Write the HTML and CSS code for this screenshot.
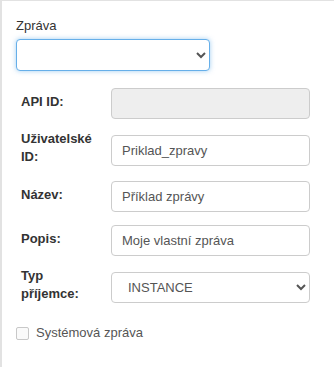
FILE: index.html
```html
<!DOCTYPE html>
<html lang="cs">
<head>
    <meta charset="UTF-8">
    <meta name="viewport" content="width=device-width, initial-scale=1.0">
    <title>Zpráva</title>
    <link rel="stylesheet" href="styles.css">
</head>
<body>
    <div class="panel">
        <div class="top-field">
            <label class="top-label" for="zprava">Zpráva</label>
            <select id="zprava" class="form-select focused">
                <option></option>
            </select>
        </div>

        <div class="form-row first-row">
            <label class="row-label">API ID:</label>
            <input type="text" class="form-input" disabled>
        </div>

        <div class="form-row">
            <label class="row-label">Uživatelské ID:</label>
            <input type="text" class="form-input" value="Priklad_zpravy">
        </div>

        <div class="form-row">
            <label class="row-label">Název:</label>
            <input type="text" class="form-input" value="Příklad zprávy">
        </div>

        <div class="form-row">
            <label class="row-label">Popis:</label>
            <input type="text" class="form-input" value="Moje vlastní zpráva">
        </div>

        <div class="form-row">
            <label class="row-label">Typ příjemce:</label>
            <select class="form-select row-select">
                <option>INSTANCE</option>
            </select>
        </div>

        <label class="check-row">
            <input type="checkbox" class="check-box">
            <span>Systémová zpráva</span>
        </label>
    </div>
</body>
</html>
```

FILE: styles.css
```css
* {
    margin: 0;
    padding: 0;
    box-sizing: border-box;
}
html, body {
    height: 100%;
}
body {
    font-family: 'Liberation Sans', Arial, sans-serif;
    font-size: 13px;
    color: #333;
    background: #fff;
}
.panel {
    min-height: 100%;
    border-top: 1px solid #e2e2e2;
    border-left: 2px solid #e2e2e2;
    padding: 16px 0 0 14px;
}
.top-field {
    display: flex;
    flex-direction: column;
    align-items: flex-start;
}
.top-label {
    line-height: 18px;
    margin-bottom: 4px;
}
.form-select,
.form-input {
    height: 32px;
    border: 1px solid #ccc;
    border-radius: 4px;
    font-family: inherit;
    font-size: 13px;
    color: #555;
    background-color: #fff;
    outline: none;
}
.form-select {
    width: 194px;
    padding: 0 6px 0 12px;
}
.focused {
    border-color: #66afe9;
    box-shadow: 0 0 5px rgba(102, 175, 233, 0.6);
}
.form-row {
    display: grid;
    grid-template-columns: 95px 199px;
    align-items: center;
    margin-top: 13px;
}
.first-row {
    margin-top: 17px;
}
.row-label {
    padding-left: 5px;
    padding-right: 8px;
    margin: -2px 0 2px;
    line-height: 18px;
    font-weight: bold;
}
.form-row .form-input,
.form-row .form-select {
    width: 199px;
    height: 31px;
}
.form-input {
    padding: 0 10px;
}
.form-input:disabled {
    background: #eee;
}
.row-select {
    padding-left: 12px;
}
.check-row {
    display: flex;
    align-items: center;
    gap: 7px;
    margin-top: 21px;
    color: #555;
    line-height: 14px;
}
.check-box {
    appearance: none;
    width: 13px;
    height: 13px;
    border: 1px solid #c8c8c8;
    border-radius: 2px;
    background: #fafafa;
}
```
